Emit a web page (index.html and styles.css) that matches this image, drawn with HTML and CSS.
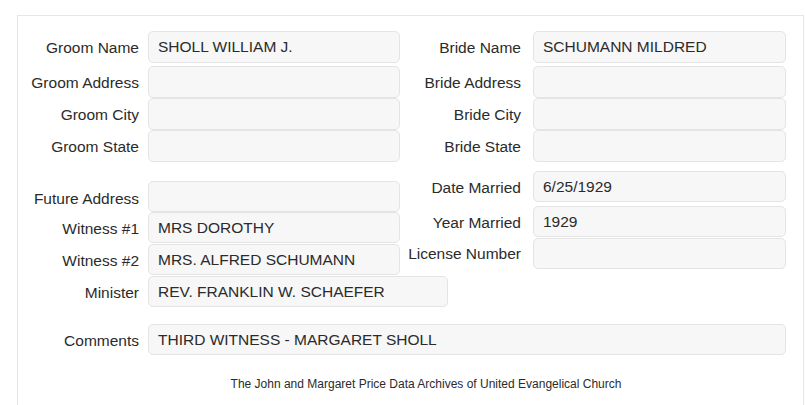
FILE: index.html
```html
<!DOCTYPE html>
<html lang="en">
<head>
    <meta charset="UTF-8">
    <meta name="viewport" content="width=device-width, initial-scale=1.0">
    <title>Marriage Record</title>
    <link rel="stylesheet" href="styles.css">
</head>
<body>
    <div class="record">
        <div class="section top">
            <div class="col left">
                <div class="row first"><label>Groom Name</label><div class="field">SHOLL WILLIAM J.</div></div>
                <div class="row"><label>Groom Address</label><div class="field"></div></div>
                <div class="row"><label>Groom City</label><div class="field"></div></div>
                <div class="row"><label>Groom State</label><div class="field"></div></div>
            </div>
            <div class="col right">
                <div class="row first"><label>Bride Name</label><div class="field">SCHUMANN MILDRED</div></div>
                <div class="row"><label>Bride Address</label><div class="field"></div></div>
                <div class="row"><label>Bride City</label><div class="field"></div></div>
                <div class="row"><label>Bride State</label><div class="field"></div></div>
            </div>
        </div>

        <div class="section middle">
            <div class="col left shifted">
                <div class="row short"><label class="low">Future Address</label><div class="field"></div></div>
                <div class="row short"><label>Witness #1</label><div class="field">MRS DOROTHY</div></div>
                <div class="row short gap1"><label>Witness #2</label><div class="field">MRS. ALFRED SCHUMANN</div></div>
                <div class="row short gap1"><label>Minister</label><div class="field wide">REV. FRANKLIN W. SCHAEFER</div></div>
            </div>
            <div class="col right">
                <div class="row short"><label>Date Married</label><div class="field">6/25/1929</div></div>
                <div class="row short gap4"><label>Year Married</label><div class="field">1929</div></div>
                <div class="row short gap1"><label class="high">License Number</label><div class="field"></div></div>
            </div>
        </div>

        <div class="row comments"><label>Comments</label><div class="field">THIRD WITNESS - MARGARET SHOLL</div></div>

        <div class="footer">The John and Margaret Price Data Archives of United Evangelical Church</div>
    </div>
</body>
</html>
```

FILE: styles.css
```css
body {
    margin: 0; padding: 0; background-color: #fff; font-family: "Liberation Sans", Arial, sans-serif; color: #2b2b2b;
}
.record {
    margin: 15px 1px 0 17px; border: 1px solid #e6e6e6; border-bottom: none; padding: 15px 17px 20px 0; height: 395px; box-sizing: border-box;
}
.section {
    display: flex;
}
.col {
    display: flex; flex-direction: column;
}
.col.left {
    width: 382px;
}
.col.right {
    flex: 1;
}
.col.shifted {
    padding-top: 10px;
}
.row {
    display: flex; align-items: center; height: 32px; font-size: 15.5px;
}
.row.first {
    margin-bottom: 3px;
}
.row.short {
    height: 31px;
}
.row.gap1 {
    margin-top: 1px;
}
.row.gap4 {
    margin-top: 4px;
}
.row label {
    width: 121px; flex: none; text-align: right; padding-top: 2px; white-space: nowrap;
}
.row label.low {
    padding-top: 4px;
}
.row label.high {
    padding-top: 0;
}
.left .row label, .comments label {
    margin-right: 9px;
}
.right .row label {
    margin-right: 12px;
}
.field {
    flex: 1; height: 100%; box-sizing: border-box; border: 1px solid #e4e4e4; border-radius: 5px; background-color: #f7f7f7; padding: 0 9px; display: flex; align-items: center; white-space: nowrap;
}
.field.wide {
    flex: none; width: 300px; margin-right: -48px;
}
.section.middle {
    margin-top: 9px;
}
.comments {
    margin-top: 17px; height: 31px;
}
.footer {
    margin-top: 22px; text-align: center; font-size: 12px; padding-left: 48px;
}
```
